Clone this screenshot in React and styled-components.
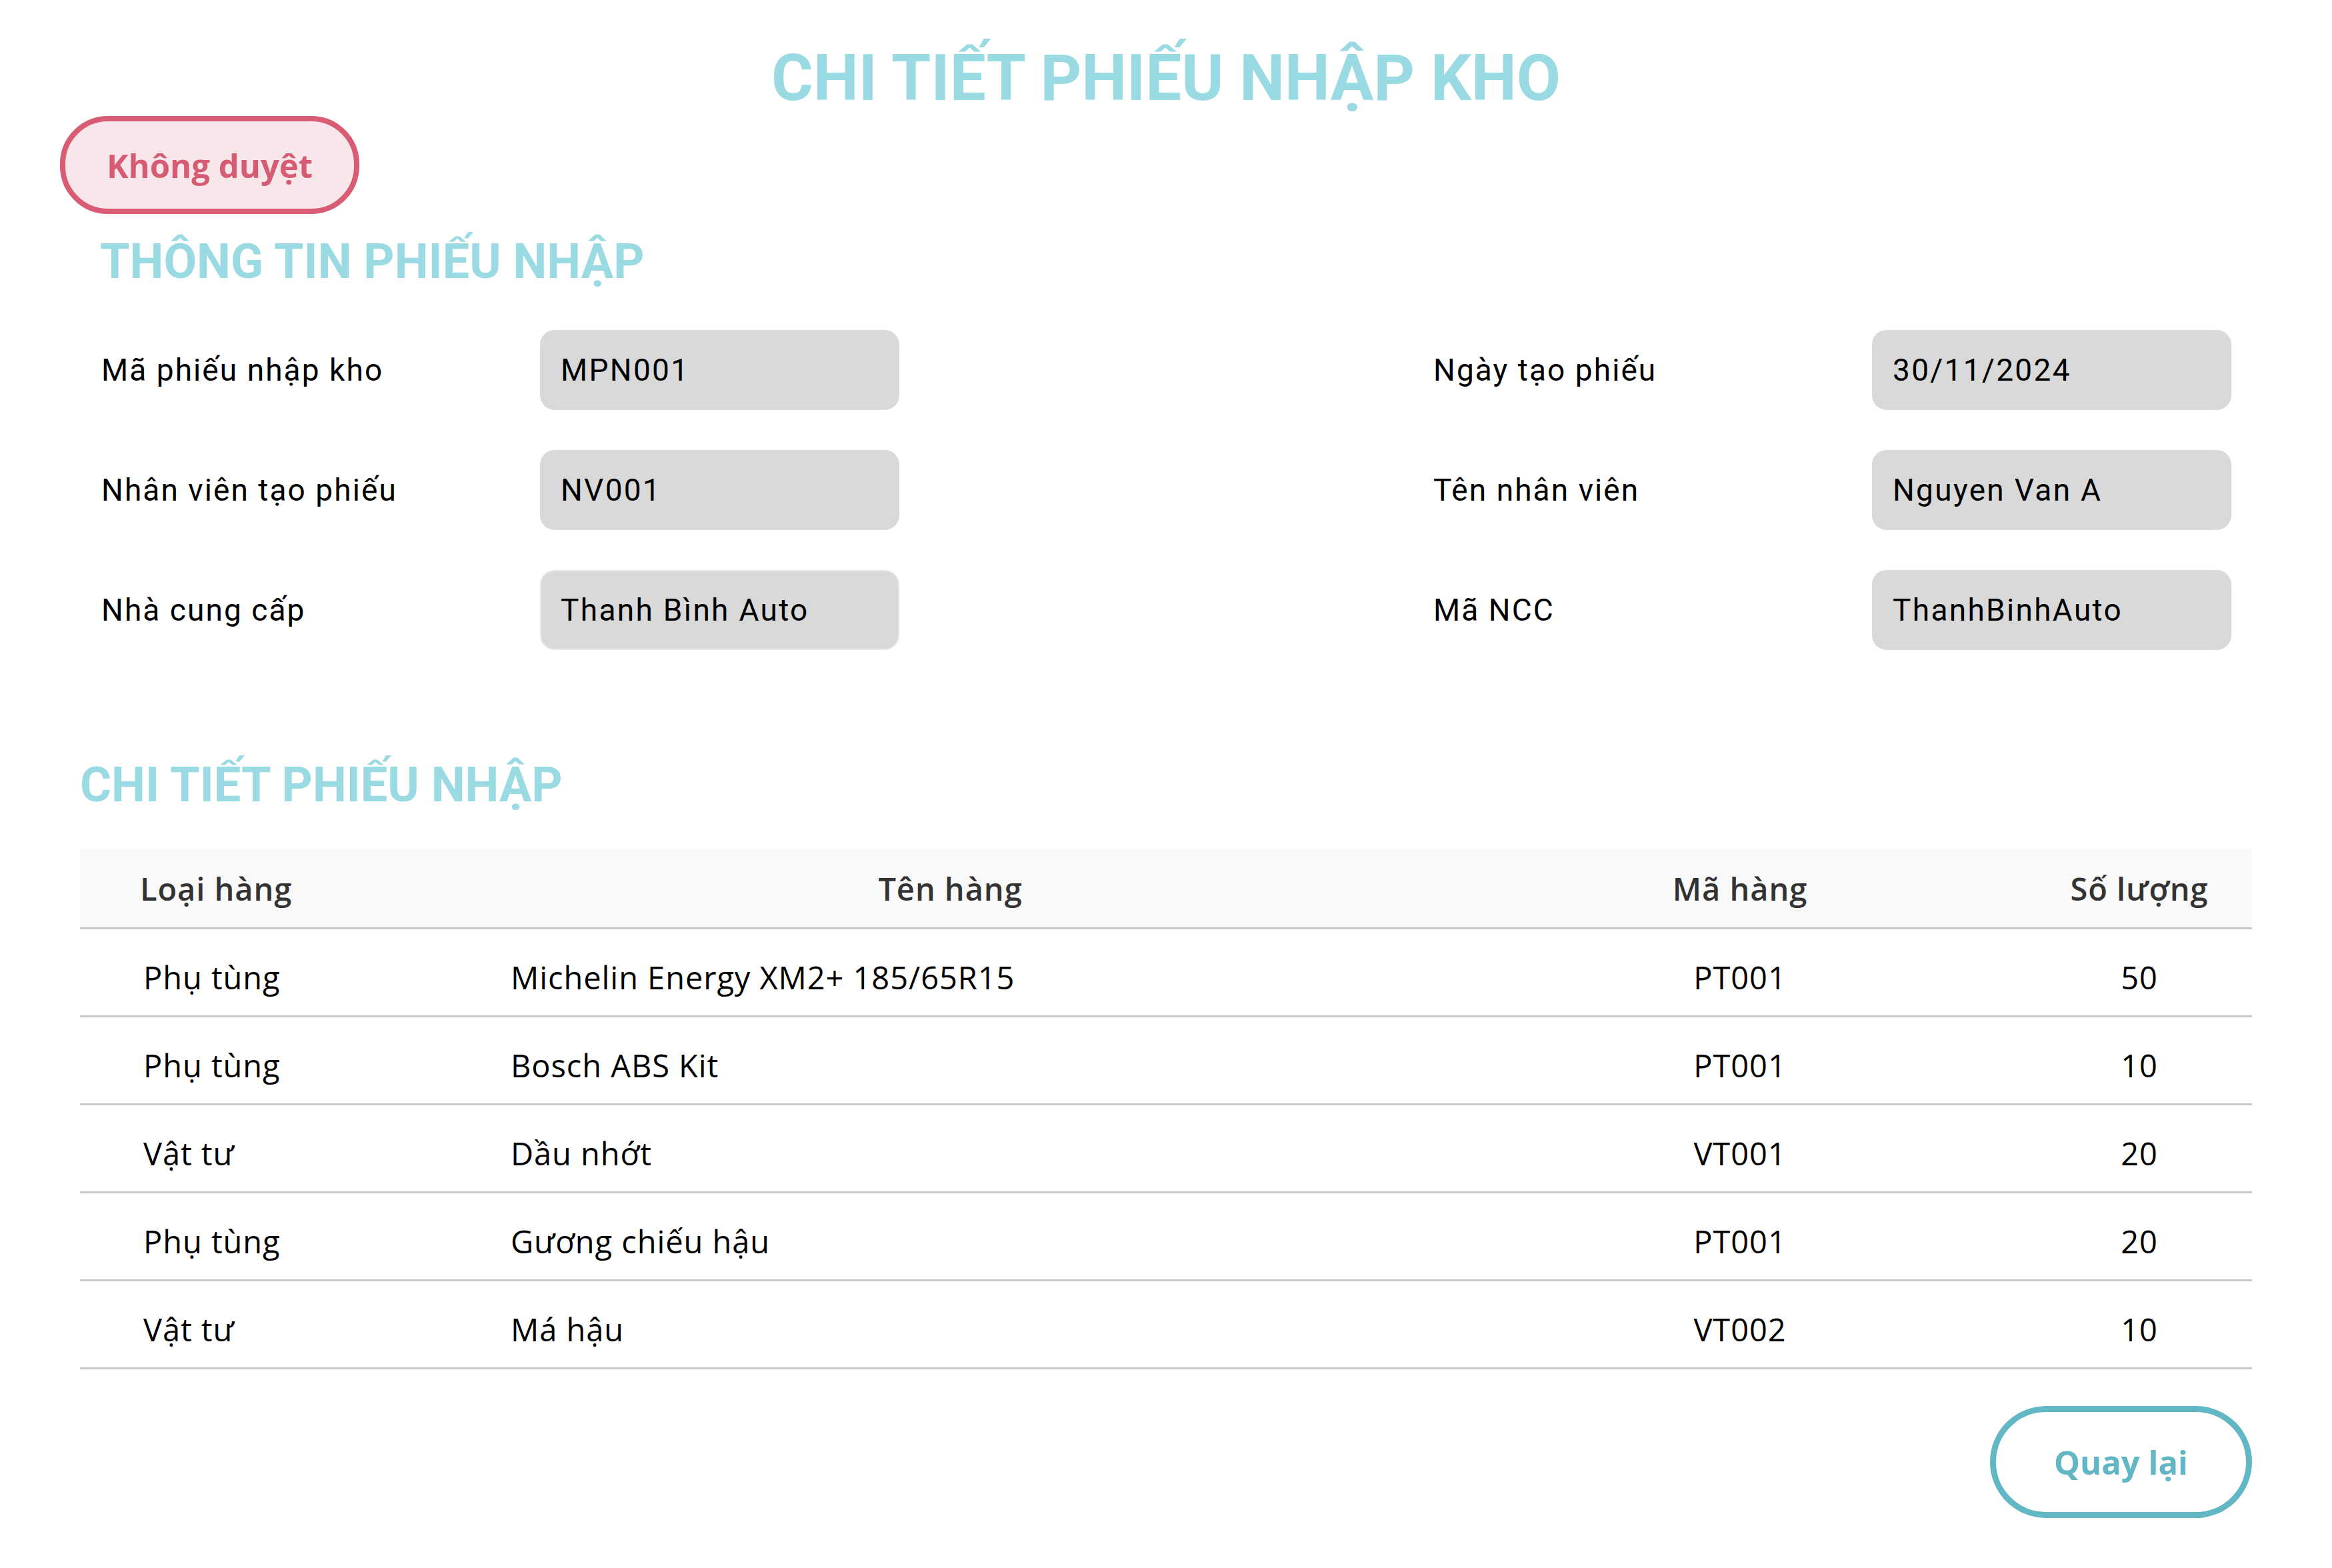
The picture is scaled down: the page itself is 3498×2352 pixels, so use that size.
import React from "react";
import styled, { createGlobalStyle } from "styled-components";

const GlobalStyle = createGlobalStyle`
    * {
        box-sizing: border-box;
    }
    body {
        margin: 0;
        background: #ffffff;
        font-family: "Roboto", "Liberation Sans", sans-serif;
    }
`;

const info = [
    ["Mã phiếu nhập kho", "MPN001", "Ngày tạo phiếu", "30/11/2024"],
    ["Nhân viên tạo phiếu", "NV001", "Tên nhân viên", "Nguyen Van A"],
    ["Nhà cung cấp", "Thanh Bình Auto", "Mã NCC", "ThanhBinhAuto"],
];

const items = [
    ["Phụ tùng", "Michelin Energy XM2+ 185/65R15", "PT001", "50"],
    ["Phụ tùng", "Bosch ABS Kit", "PT001", "10"],
    ["Vật tư", "Dầu nhớt", "VT001", "20"],
    ["Phụ tùng", "Gương chiếu hậu", "PT001", "20"],
    ["Vật tư", "Má hậu", "VT002", "10"],
];

const App = () => {
    return (
        <Page>
            <GlobalStyle />
            <Title>CHI TIẾT PHIẾU NHẬP KHO</Title>
            <StatusBadge>Không duyệt</StatusBadge>

            <SectionTitle $indent={150} $top={36}>
                THÔNG TIN PHIẾU NHẬP
            </SectionTitle>
            <InfoGrid>
                {info.map(([l1, v1, l2, v2], i) => (
                    <React.Fragment key={i}>
                        <Field>
                            <FieldLabel>{l1}</FieldLabel>
                            <FieldValue $outlined={i === 2}>{v1}</FieldValue>
                        </Field>
                        <Field>
                            <FieldLabel>{l2}</FieldLabel>
                            <FieldValue>{v2}</FieldValue>
                        </Field>
                    </React.Fragment>
                ))}
            </InfoGrid>

            <SectionTitle $indent={120} $top={167}>
                CHI TIẾT PHIẾU NHẬP
            </SectionTitle>
            <Table>
                <HeadRow>
                    <HeadCell $align="left">Loại hàng</HeadCell>
                    <HeadCell $align="center">Tên hàng</HeadCell>
                    <HeadCell $align="center">Mã hàng</HeadCell>
                    <HeadCell $align="center">Số lượng</HeadCell>
                </HeadRow>
                {items.map(([type, name, code, qty], i) => (
                    <BodyRow key={i}>
                        <Cell $align="left">{type}</Cell>
                        <Cell $align="left">{name}</Cell>
                        <Cell $align="center">{code}</Cell>
                        <Cell $align="center">{qty}</Cell>
                    </BodyRow>
                ))}
            </Table>

            <BackButton>Quay lại</BackButton>
        </Page>
    );
};

export default App;

const Page = styled.div`
    width: 3498px;
    padding: 69px 0 60px;
    display: flex;
    flex-direction: column;
`;

const Title = styled.h1`
    margin: 0;
    font-family: "Roboto", sans-serif;
    font-weight: 700;
    font-size: 96px;
    line-height: 1;
    text-align: center;
    color: #99dae3;
`;

const StatusBadge = styled.div`
    align-self: flex-start;
    margin: 9px 0 0 90px;
    width: 449px;
    height: 147px;
    display: flex;
    align-items: center;
    justify-content: center;
    border: 8px solid #d85c74;
    border-radius: 72px;
    background: #f7e6ea;
    color: #d55c72;
    font-family: "Open Sans", sans-serif;
    font-weight: 700;
    font-size: 49px;
`;

const SectionTitle = styled.h2`
    margin: ${(p) => p.$top}px 0 0 ${(p) => p.$indent}px;
    font-family: "Roboto", sans-serif;
    font-weight: 700;
    font-size: 72px;
    line-height: 1;
    color: #99dae3;
`;

const InfoGrid = styled.div`
    margin: 66px 0 0 152px;
    display: grid;
    grid-template-columns: repeat(2, 1197px);
    column-gap: 801px;
    row-gap: 60px;
`;

const Field = styled.div`
    display: grid;
    grid-template-columns: 658px 539px;
    align-items: center;
`;

const FieldLabel = styled.span`
    font-size: 46px;
    letter-spacing: 0.045em;
    color: #000;
`;

const FieldValue = styled.div`
    height: 120px;
    display: flex;
    align-items: center;
    padding-left: 29px;
    border-radius: 22px;
    background: #d9d9d9;
    border: 2px solid ${(p) => (p.$outlined ? "#e6e6e6" : "#d9d9d9")};
    font-size: 46px;
    letter-spacing: 0.05em;
    color: #000;
`;

const Table = styled.div`
    margin: 60px 120px 0;
    font-family: "Open Sans", sans-serif;
`;

const HeadRow = styled.div`
    display: grid;
    grid-template-columns: 551px 1509px 860px 338px;
    height: 120px;
    background: #f9f9f9;
    border-bottom: 3px solid #c8c8c8;
`;

const BodyRow = styled(HeadRow)`
    height: 132px;
    background: transparent;
`;

const HeadCell = styled.div`
    display: flex;
    align-items: center;
    justify-content: ${(p) => (p.$align === "center" ? "center" : "flex-start")};
    padding: 0 ${(p) => (p.$align === "center" ? 0 : 90)}px;
    font-size: 47px;
    font-weight: 600;
    letter-spacing: 0.02em;
    color: #333;
`;

const Cell = styled(HeadCell)`
    padding-top: 14px;
    padding-left: ${(p) => (p.$align === "center" ? 0 : 95)}px;
    font-weight: 400;
    color: #000;
`;

const BackButton = styled.button`
    align-self: flex-end;
    margin: 55px 120px 0 0;
    width: 393px;
    height: 168px;
    border: 9px solid #62b7c4;
    border-radius: 84px;
    background: #fff;
    color: #62b7c4;
    font-family: "Open Sans", sans-serif;
    font-weight: 700;
    font-size: 49px;
    cursor: pointer;
`;
